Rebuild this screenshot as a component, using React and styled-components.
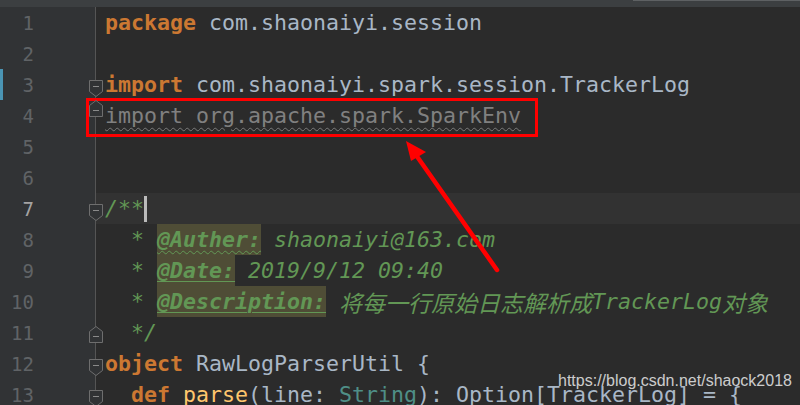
import React from 'react';
import styled, { createGlobalStyle } from 'styled-components';

const ROW = 31;

const lines = [
  { n: 1, parts: [['kw', 'package'], ['id', ' com.shaonaiyi.session']] },
  { n: 2, parts: [] },
  { n: 3, fold: 'start', changed: true, parts: [['kw', 'import'], ['id', ' com.shaonaiyi.spark.session.TrackerLog']] },
  { n: 4, fold: 'end', foldTop: -1, parts: [['unused', 'import org.apache.spark.SparkEnv']] },
  { n: 5, parts: [] },
  { n: 6, parts: [] },
  { n: 7, fold: 'start', current: true, parts: [['doc', '/**'], ['caret', '']] },
  { n: 8, parts: [['doc', '  * '], ['tagWavy', '@Auther:'], ['doc', ' shaonaiyi@163.com']] },
  { n: 9, parts: [['doc', '  * '], ['tag', '@Date:'], ['doc', ' 2019/9/12 09:40']] },
  {
    n: 10,
    parts: [['doc', '  * '], ['tag', '@Description:'], ['doc', ' '], ['cjk', '将每一行原始日志解析成'], ['doc', 'TrackerLog'], ['cjk', '对象']],
  },
  { n: 11, fold: 'end', foldTop: 8, parts: [['doc', '  */']] },
  { n: 12, fold: 'start', parts: [['kw', 'object'], ['id', ' RawLogParserUtil {']] },
  {
    n: 13,
    fold: 'start',
    parts: [['id', '  '], ['kw', 'def'], ['id', ' '], ['fn', 'parse'], ['id', '(line: '], ['type', 'String'], ['id', '): Option[TrackerLog] = {']],
  },
];

const FoldMark = ({ kind }) => (
  <svg width="16" height="19" viewBox="0 0 16 19">
    {kind === 'start' ? (
      <path d="M1.5 1.5 H14.5 V12.5 L8 17.5 L1.5 12.5 Z" fill="#313335" stroke="#6e6e6e" strokeWidth="1" />
    ) : (
      <path d="M1.5 6.5 L8 1.5 L14.5 6.5 V17.5 H1.5 Z" fill="#313335" stroke="#6e6e6e" strokeWidth="1" />
    )}
    <path d={kind === 'start' ? 'M5 7.5 H11' : 'M5 11.5 H11'} stroke="#8a8a8a" strokeWidth="1" />
  </svg>
);

const Token = ({ kind, text }) => {
  switch (kind) {
    case 'kw':
      return <Kw>{text}</Kw>;
    case 'id':
      return <Plain>{text}</Plain>;
    case 'unused':
      return <Unused>{text}</Unused>;
    case 'doc':
      return <Doc>{text}</Doc>;
    case 'tag':
      return <DocTag>{text}</DocTag>;
    case 'tagWavy':
      return <DocTag $wavy>{text}</DocTag>;
    case 'cjk':
      return <Cjk>{text}</Cjk>;
    case 'fn':
      return <Fn>{text}</Fn>;
    case 'type':
      return <TypeName>{text}</TypeName>;
    case 'caret':
      return <Caret />;
    default:
      return <Plain>{text}</Plain>;
  }
};

const App = () => (
  <>
    <GlobalStyle />
    <Screen>
      <TabStrip>
        <TabEdge />
      </TabStrip>

      <Editor>
        {lines.map((line) => (
          <Row key={line.n}>
            <Gutter $changed={line.changed}>
              <LineNo $current={line.current}>{line.n}</LineNo>
              {line.fold && (
                <Fold $top={line.foldTop ?? (line.fold === 'start' ? 10 : 4)}>
                  <FoldMark kind={line.fold} />
                </Fold>
              )}
            </Gutter>

            <Code $current={line.current}>
              {line.parts.map(([kind, text], i) => (
                <Token key={i} kind={kind} text={text} />
              ))}
            </Code>
          </Row>
        ))}
      </Editor>

      <Callout />

      <Arrow width="800" height="405" viewBox="0 0 800 405">
        <line x1="497" y1="270" x2="416" y2="155" stroke="#ff0000" strokeWidth="4.5" strokeLinecap="round" />
        <polygon points="406,141 426,152 411,161" fill="#ff0000" />
      </Arrow>

      <Watermark>https://blog.csdn.net/shaock2018</Watermark>
    </Screen>
  </>
);

const GlobalStyle = createGlobalStyle`
  html, body {
    margin: 0;
    padding: 0;
    background: #2b2b2b;
  }
`;

const Screen = styled.div`
  position: relative;
  width: 800px;
  height: 405px;
  overflow: hidden;
  background: #2b2b2b;
`;

const TabStrip = styled.div`
  display: flex;
  justify-content: flex-end;
  height: 7px;
  background: #3c3f41;
`;

const TabEdge = styled.div`
  width: 167px;
  height: 1px;
  background: #5e6163;
`;

const Editor = styled.div`
  display: flex;
  flex-direction: column;
`;

const Row = styled.div`
  display: flex;
  height: ${ROW}px;
`;

const Gutter = styled.div`
  position: relative;
  flex: 0 0 95px;
  display: flex;
  align-items: center;
  background: #313335;
  border-right: 1px solid #555555;
  box-shadow: ${({ $changed }) => ($changed ? 'inset 3px 0 0 #4a94b3' : 'none')};
`;

const LineNo = styled.span`
  width: 34px;
  text-align: right;
  font-family: 'DejaVu Sans Mono', monospace;
  font-size: 19px;
  color: ${({ $current }) => ($current ? '#a4a3a3' : '#606366')};
`;

const Fold = styled.div`
  position: absolute;
  top: ${({ $top }) => $top}px;
  right: -9px;
  width: 16px;
  height: 19px;
  line-height: 0;
  z-index: 1;
`;

const Code = styled.div`
  flex: 1;
  display: flex;
  align-items: center;
  padding-left: 9px;
  background: ${({ $current }) => ($current ? '#323232' : 'transparent')};
  font-family: 'DejaVu Sans Mono', monospace;
  font-size: 21.6px;
  white-space: pre;
  color: #a9b7c6;
`;

const Plain = styled.span`
  color: #a9b7c6;
`;

const Kw = styled.span`
  color: #cc7832;
  font-weight: bold;
`;

const Fn = styled.span`
  color: #ffc66d;
`;

const TypeName = styled.span`
  color: #4f8f87;
`;

const Unused = styled.span`
  color: #808080;
  text-decoration: underline wavy #7a7a7a 1px;
  text-underline-offset: 4px;
`;

const Doc = styled.span`
  color: #629755;
  font-style: italic;
`;

const DocTag = styled.span`
  display: inline-flex;
  align-items: center;
  height: ${ROW}px;
  color: #629755;
  font-style: italic;
  font-weight: bold;
  background: #4f4d36;
  text-decoration: ${({ $wavy }) => ($wavy ? 'underline wavy #629755 1px' : 'underline #629755 1px')};
  text-underline-offset: 3px;
`;

const Cjk = styled.span`
  color: #629755;
  font-style: italic;
  font-family: 'Noto Sans CJK SC', sans-serif;
  font-size: 23px;
`;

const Caret = styled.span`
  display: inline-block;
  width: 3px;
  height: 26px;
  background: #bbbbbb;
`;

const Callout = styled.div`
  position: absolute;
  left: 86px;
  top: 98px;
  width: 452px;
  height: 39px;
  box-sizing: border-box;
  border: 3px solid #ff0000;
`;

const Arrow = styled.svg`
  position: absolute;
  left: 0;
  top: 0;
  pointer-events: none;
`;

const Watermark = styled.div`
  position: absolute;
  left: 558px;
  top: 372px;
  font-family: 'Liberation Sans', Arial, sans-serif;
  font-size: 16px;
  color: rgba(235, 235, 235, 0.85);
  white-space: nowrap;
`;

export default App;
